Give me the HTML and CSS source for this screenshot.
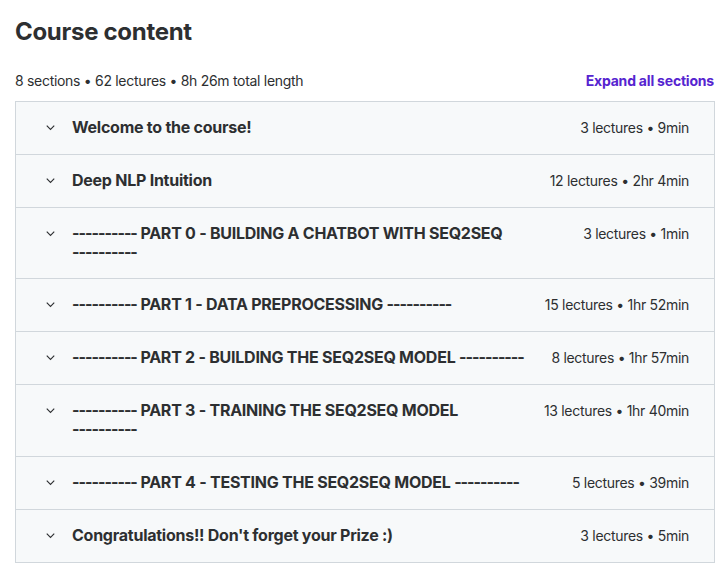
FILE: index.html
```html
<!DOCTYPE html>
<html lang="en">
<head>
    <meta charset="UTF-8">
    <meta name="viewport" content="width=device-width, initial-scale=1.0">
    <title>Course content</title>
    <link rel="stylesheet" href="styles.css">
</head>
<body>
    <div class="container">
        <h2>Course content</h2>
        <div class="summary">
            <span>8 sections • 62 lectures • 8h 26m total length</span>
            <a href="#" class="expand">Expand all sections</a>
        </div>
        <div class="sections">
            <div class="section">
                <svg class="chevron" viewBox="0 0 24 24"><path d="M6 9l6 6 6-6"/></svg>
                <span class="title">Welcome to the course!</span>
                <span class="meta">3 lectures • 9min</span>
            </div>
            <div class="section">
                <svg class="chevron" viewBox="0 0 24 24"><path d="M6 9l6 6 6-6"/></svg>
                <span class="title">Deep NLP Intuition</span>
                <span class="meta">12 lectures • 2hr 4min</span>
            </div>
            <div class="section">
                <svg class="chevron" viewBox="0 0 24 24"><path d="M6 9l6 6 6-6"/></svg>
                <span class="title"><span class="dash">----------</span> PART 0 - BUILDING A CHATBOT WITH SEQ2SEQ <span class="dash">----------</span></span>
                <span class="meta">3 lectures • 1min</span>
            </div>
            <div class="section">
                <svg class="chevron" viewBox="0 0 24 24"><path d="M6 9l6 6 6-6"/></svg>
                <span class="title"><span class="dash">----------</span> PART 1 - DATA PREPROCESSING <span class="dash">----------</span></span>
                <span class="meta">15 lectures • 1hr 52min</span>
            </div>
            <div class="section">
                <svg class="chevron" viewBox="0 0 24 24"><path d="M6 9l6 6 6-6"/></svg>
                <span class="title"><span class="dash">----------</span> PART 2 - BUILDING THE SEQ2SEQ MODEL <span class="dash">----------</span></span>
                <span class="meta">8 lectures • 1hr 57min</span>
            </div>
            <div class="section">
                <svg class="chevron" viewBox="0 0 24 24"><path d="M6 9l6 6 6-6"/></svg>
                <span class="title"><span class="dash">----------</span> PART 3 - TRAINING THE SEQ2SEQ MODEL <span class="dash">----------</span></span>
                <span class="meta">13 lectures • 1hr 40min</span>
            </div>
            <div class="section">
                <svg class="chevron" viewBox="0 0 24 24"><path d="M6 9l6 6 6-6"/></svg>
                <span class="title"><span class="dash">----------</span> PART 4 - TESTING THE SEQ2SEQ MODEL <span class="dash">----------</span></span>
                <span class="meta">5 lectures • 39min</span>
            </div>
            <div class="section">
                <svg class="chevron" viewBox="0 0 24 24"><path d="M6 9l6 6 6-6"/></svg>
                <span class="title">Congratulations!! Don't forget your Prize :)</span>
                <span class="meta">3 lectures • 5min</span>
            </div>
        </div>
    </div>
</body>
</html>
```

FILE: styles.css
```css
body {
    font-family: Inter, "Noto Sans", sans-serif;
    background-color: #fff;
    margin: 0;
    padding: 0;
    color: #2d2f31;
}
.container {
    padding: 18px 13px 0 15px;
}
h2 {
    font-size: 24px;
    font-weight: 700;
    line-height: 1.2;
    margin: 0 0 25px;
    letter-spacing: -0.3px;
}
.summary {
    display: flex;
    justify-content: space-between;
    align-items: flex-end;
    font-size: 14px;
    letter-spacing: -0.3px;
    margin-bottom: 12px;
}
.expand {
    color: #5624d0;
    font-weight: 700;
    text-decoration: none;
    letter-spacing: -0.2px;
    margin-right: 1px;
}
.sections {
    border: 1px solid #d1d7dc;
    border-bottom: none;
    width: 698px;
}
.section {
    display: flex;
    align-items: flex-start;
    padding: 16px 25px 16px 27px;
    background-color: #f7f9fa;
    border-bottom: 1px solid #d1d7dc;
}
.chevron {
    width: 15px;
    height: 15px;
    margin: 2px 14px 0 0;
    flex-shrink: 0;
    fill: none;
    stroke: #2d2f31;
    stroke-width: 1.8;
}
.title {
    flex: 1;
    font-size: 16px;
    font-weight: 700;
    line-height: 19.2px;
    letter-spacing: -0.25px;
    margin-right: 22px;
}
.dash {
    white-space: nowrap;
    letter-spacing: -1px;
}
.meta {
    font-size: 14px;
    line-height: 20px;
    letter-spacing: -0.3px;
    white-space: nowrap;
}
```
